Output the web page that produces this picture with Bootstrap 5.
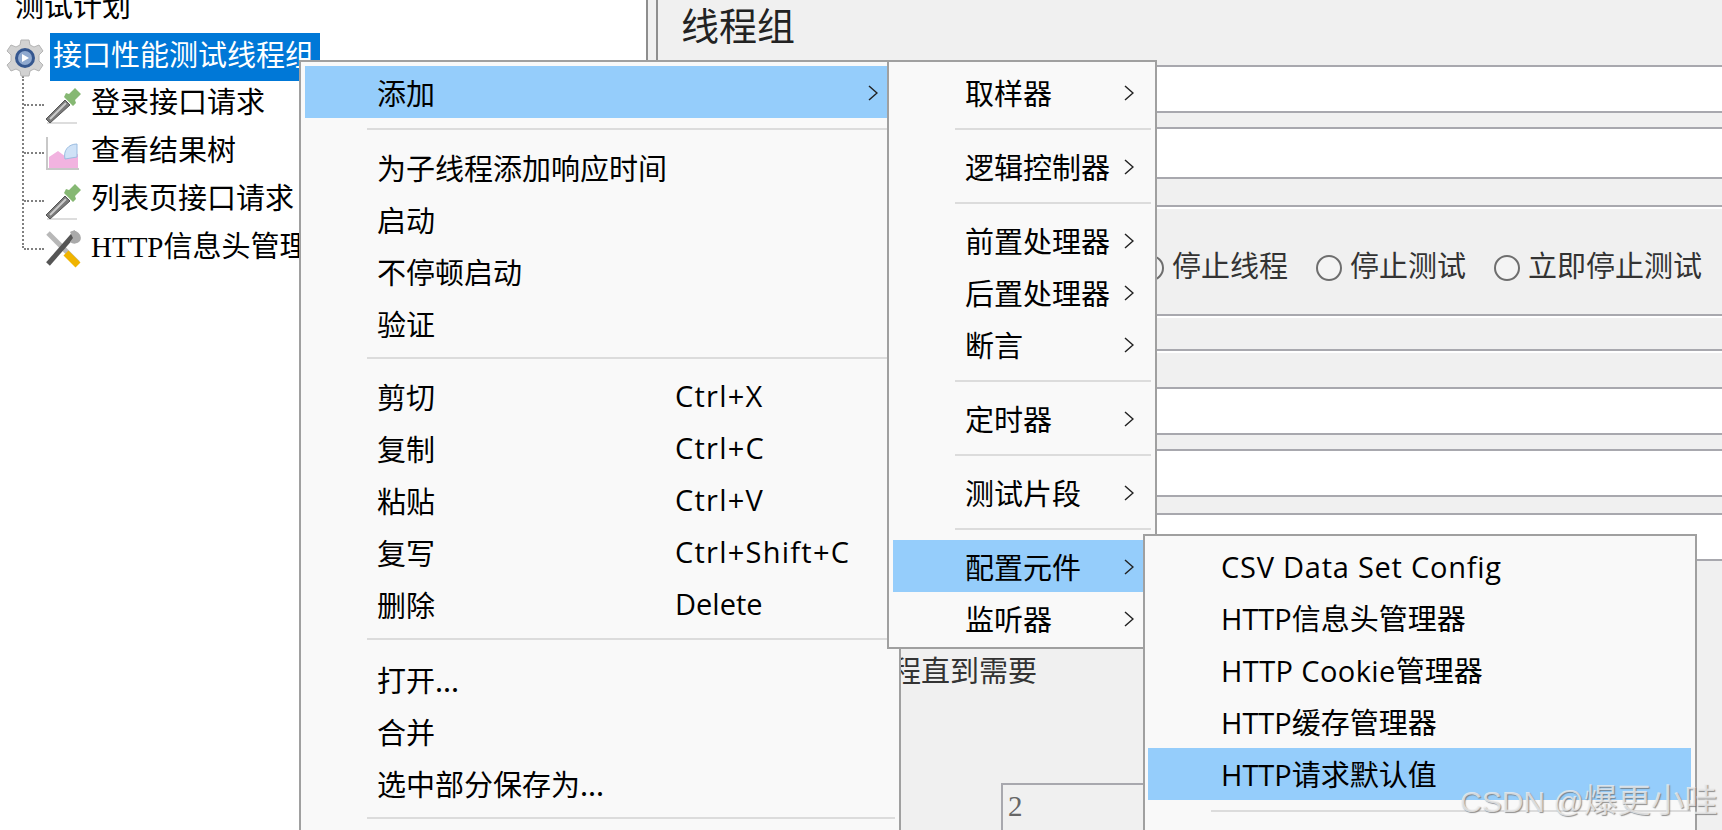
<!DOCTYPE html>
<html lang="zh"><head><meta charset="utf-8"><title>JMeter</title>
<link rel="stylesheet" href="https://cdn.jsdelivr.net/npm/bootstrap@5.3.0/dist/css/bootstrap.min.css">
<style>
html,body{height:830px;overflow:hidden}
body{background:#f0f0f0;font-family:"Noto Sans CJK SC",sans-serif;color:#000}
.stage{height:830px;position:relative;overflow:hidden}
.tree-pane{width:646px;height:830px;background:#fff;flex:none;font-family:"Liberation Serif","Noto Sans CJK SC",serif;font-size:29px;position:relative}
.split-bar{width:12px;flex:none;background:#f0f0f0;border-left:2px solid #8e8e8e;border-right:2px solid #8e8e8e;height:830px}
.plan-title{line-height:34px;margin:-10px 0 0 15px;height:43px}
.tree-root{height:48px;padding-left:6px}
.gear-icon{margin-top:6px;flex:none}
.sel-label{background:#0078d7;color:#fff;height:48px;width:270px;padding-left:3px;line-height:46px;margin-left:6px;white-space:nowrap;overflow:hidden}
.tree-kids{margin-left:22px;border-left:2px dotted #808080;height:172px;padding-top:5px;margin-top:-5px}
.tree-kid{height:48px;position:relative;white-space:nowrap;align-items:center}
.tree-kid::before{content:"";width:20px;border-top:2px dotted #808080;flex:none}
.tree-kid svg{flex:none;margin-right:10px}
.kid-text{margin-left:-1px;margin-top:-3px}
.right-pane{flex:1;min-width:0;font-family:"Liberation Serif","Noto Sans CJK SC",serif;color:#333;font-size:29px}
.pane-title{height:65px;font-size:38px;line-height:54px;padding-left:23px;color:#222}
.field-box{margin-left:120px;background:#fff;border-top:2px solid #a8a8ae;border-bottom:2px solid #a8a8ae;height:48px}
.gap-a{height:14px}.gap-b{height:26px}.gap-c{height:33px}.gap-e{height:16px}
.tall-box{height:52px}
.group-box{margin-left:120px;border-top:2px solid #a8a8ae;border-bottom:2px solid #a8a8ae;height:111px;box-shadow:inset 0 2px 0 #fff,0 2px 0 #fff;padding:14px 20px 0 0;line-height:1}
.group-low{height:38px;border-bottom:0;box-shadow:inset 0 2px 0 #fff;padding:0}
.opt-item{display:flex;align-items:center;gap:8px;white-space:nowrap}
.opt-spaced{margin-right:28px}
.opt-dot{width:26px;height:26px;border:2px solid #6e6e6e;border-radius:50%;background:#f4f4f4;flex:none}
.keep-text{position:absolute;left:863px;top:655px;white-space:nowrap;font-family:"Liberation Serif","Noto Sans CJK SC",serif;font-size:29px;line-height:34px;color:#333}
.count-box{position:absolute;left:1001px;top:783px;width:300px;height:60px;border:2px solid #a8a8ae;padding-left:5px;font-family:"Liberation Serif",serif;font-size:29px;line-height:42px;color:#666}
.pop-menu{position:absolute;background:#f9f9f9;border:2px solid #a0a0a0;padding-top:4px;font-size:29px;line-height:52px;color:#000}
.menu-one{left:299px;top:60px;width:602px;height:800px;padding-left:4px;padding-right:4px;z-index:2}
.menu-two{left:887px;top:60px;width:270px;height:589px;padding-left:4px;padding-right:4px;z-index:3}
.menu-three{left:1143px;top:534px;width:554px;height:320px;padding-left:3px;padding-right:4px;z-index:4;font-family:"Open Sans","Noto Sans CJK SC",sans-serif}
.menu-row{height:52px;white-space:nowrap;position:relative;padding-left:72px}
.menu-three .menu-row{padding-left:73px;line-height:54px}
.menu-on{background:#95cdfb}
.key-text{position:absolute;left:370px;top:0;letter-spacing:1.25px;font-family:"Open Sans",sans-serif}
.key-tight{letter-spacing:0}
.csv-wide{letter-spacing:.75px}
.cookie-wide{letter-spacing:.4px}
.chev{position:absolute;top:19px}
.menu-one .chev{left:563px}
.menu-two .chev{left:231px}
.menu-sep{height:23px;padding-top:10px}
.menu-sep i{display:block;height:2px;background:#dcdcdc;margin-left:62px}
.menu-two .menu-sep{height:22px}
.menu-one .sep-mid{height:21px;padding-top:8px}
.menu-one .sep-low{padding-top:8px}
.menu-three .menu-sep i{margin-left:63px}
.wm-text{position:absolute;left:1460px;top:778px;z-index:5;font-size:33.5px;line-height:40px;white-space:nowrap;color:rgba(238,238,238,.8);text-shadow:1px 1px 1px rgba(110,110,110,.75);font-family:"Noto Sans CJK SC",sans-serif}
.wm-latin{font-size:30px;font-family:"Liberation Sans",sans-serif}
</style></head><body>
<div class="stage d-flex">
 <div class="tree-pane">
  <div class="plan-title">测试计划</div>
  <div class="tree-root d-flex">
   <svg class="gear-icon" width="38" height="38" viewBox="0 0 38 38"><path d="M15 1h8l1 5 4 2 5-2 4 6-4 4v6l4 4-4 6-5-2-4 2-1 5h-8l-1-5-4-2-5 2-4-6 4-4v-6l-4-4 4-6 5 2 4-2z" fill="#d2d2d2" stroke="#b4b4b4"/><circle cx="19" cy="19" r="10" fill="#35578f"/><circle cx="19" cy="19" r="7" fill="#8fa9cf"/><path d="M16 15l7 4-7 4z" fill="#fff"/></svg>
   <div class="sel-label">接口性能测试线程组</div>
  </div>
  <div class="tree-kids">
   <div class="tree-kid d-flex"><svg width="38" height="40" viewBox="0 0 38 40"><path d="M3 38h30" stroke="#ddd" stroke-width="2"/><path d="M2 34l19-19 5 5L6 38z" fill="#7a7a7a" stroke="#555"/><path d="M6 34L22 18" stroke="#ccc" stroke-width="2"/><path d="M20 12l9 9 3-3-1-3 6-6-6-6-6 6-3-1z" fill="#86b873"/></svg><span class="kid-text">登录接口请求</span></div>
   <div class="tree-kid d-flex"><svg width="38" height="40" viewBox="0 0 38 40"><path d="M3 4v32h32" fill="none" stroke="#c8c8c8" stroke-width="2"/><path d="M5 35V24l9-6 8 6 12-3v14z" fill="#f2b3e0"/><path d="M21 26c-2-8 3-15 12-15v13z" fill="#cfe2f7" stroke="#9bbce0"/></svg><span class="kid-text">查看结果树</span></div>
   <div class="tree-kid d-flex"><svg width="38" height="40" viewBox="0 0 38 40"><path d="M3 38h30" stroke="#ddd" stroke-width="2"/><path d="M2 34l19-19 5 5L6 38z" fill="#7a7a7a" stroke="#555"/><path d="M6 34L22 18" stroke="#ccc" stroke-width="2"/><path d="M20 12l9 9 3-3-1-3 6-6-6-6-6 6-3-1z" fill="#86b873"/></svg><span class="kid-text">列表页接口请求</span></div>
   <div class="tree-kid d-flex"><svg width="38" height="40" viewBox="0 0 38 40"><path d="M4 4l30 30" stroke="#b8b8b8" stroke-width="5"/><path d="M22 24l12 12" stroke="#f0b400" stroke-width="7"/><path d="M32 3L4 35" stroke="#555" stroke-width="5"/><path d="M36 12a7 7 0 0 1-10 1l3-4-3-6a7 7 0 0 1 10 9z" fill="#aaa"/></svg><span class="kid-text">HTTP信息头管理器</span></div>
  </div>
 </div>
 <div class="split-bar"></div>
 <div class="right-pane">
  <div class="pane-title">线程组</div>
  <div class="field-box"></div><div class="gap-a"></div>
  <div class="field-box tall-box"></div><div class="gap-b"></div>
  <div class="group-box d-flex align-items-center justify-content-end">
   <div class="opt-item opt-spaced"><span class="opt-dot"></span>停止线程</div>
   <div class="opt-item opt-spaced"><span class="opt-dot"></span>停止测试</div>
   <div class="opt-item"><span class="opt-dot"></span>立即停止测试</div>
  </div>
  <div class="gap-c"></div>
  <div class="group-box group-low"></div>
  <div class="field-box"></div><div class="gap-a"></div>
  <div class="field-box"></div><div class="gap-e"></div>
  <div class="field-box"></div>
 </div>
 <div class="keep-text">线程直到需要</div>
 <div class="count-box">2</div>

 <div class="pop-menu menu-one">
  <div class="menu-row menu-on">添加<svg class="chev" width="10" height="16" viewBox="0 0 10 16"><path d="M1 1l8 7-8 7" fill="none" stroke="#222" stroke-width="1.5"/></svg></div>
  <div class="menu-sep"><i></i></div>
  <div class="menu-row">为子线程添加响应时间</div>
  <div class="menu-row">启动</div>
  <div class="menu-row">不停顿启动</div>
  <div class="menu-row">验证</div>
  <div class="menu-sep sep-mid"><i></i></div>
  <div class="menu-row">剪切<span class="key-text">Ctrl+X</span></div>
  <div class="menu-row">复制<span class="key-text">Ctrl+C</span></div>
  <div class="menu-row">粘贴<span class="key-text">Ctrl+V</span></div>
  <div class="menu-row">复写<span class="key-text">Ctrl+Shift+C</span></div>
  <div class="menu-row">删除<span class="key-text key-tight">Delete</span></div>
  <div class="menu-sep sep-low"><i></i></div>
  <div class="menu-row">打开...</div>
  <div class="menu-row">合并</div>
  <div class="menu-row">选中部分保存为...</div>
  <div class="menu-sep sep-low"><i></i></div>
 </div>

 <div class="pop-menu menu-two">
  <div class="menu-row">取样器<svg class="chev" width="10" height="16" viewBox="0 0 10 16"><path d="M1 1l8 7-8 7" fill="none" stroke="#222" stroke-width="1.5"/></svg></div>
  <div class="menu-sep"><i></i></div>
  <div class="menu-row">逻辑控制器<svg class="chev" width="10" height="16" viewBox="0 0 10 16"><path d="M1 1l8 7-8 7" fill="none" stroke="#222" stroke-width="1.5"/></svg></div>
  <div class="menu-sep"><i></i></div>
  <div class="menu-row">前置处理器<svg class="chev" width="10" height="16" viewBox="0 0 10 16"><path d="M1 1l8 7-8 7" fill="none" stroke="#222" stroke-width="1.5"/></svg></div>
  <div class="menu-row">后置处理器<svg class="chev" width="10" height="16" viewBox="0 0 10 16"><path d="M1 1l8 7-8 7" fill="none" stroke="#222" stroke-width="1.5"/></svg></div>
  <div class="menu-row">断言<svg class="chev" width="10" height="16" viewBox="0 0 10 16"><path d="M1 1l8 7-8 7" fill="none" stroke="#222" stroke-width="1.5"/></svg></div>
  <div class="menu-sep"><i></i></div>
  <div class="menu-row">定时器<svg class="chev" width="10" height="16" viewBox="0 0 10 16"><path d="M1 1l8 7-8 7" fill="none" stroke="#222" stroke-width="1.5"/></svg></div>
  <div class="menu-sep"><i></i></div>
  <div class="menu-row">测试片段<svg class="chev" width="10" height="16" viewBox="0 0 10 16"><path d="M1 1l8 7-8 7" fill="none" stroke="#222" stroke-width="1.5"/></svg></div>
  <div class="menu-sep"><i></i></div>
  <div class="menu-row menu-on">配置元件<svg class="chev" width="10" height="16" viewBox="0 0 10 16"><path d="M1 1l8 7-8 7" fill="none" stroke="#222" stroke-width="1.5"/></svg></div>
  <div class="menu-row">监听器<svg class="chev" width="10" height="16" viewBox="0 0 10 16"><path d="M1 1l8 7-8 7" fill="none" stroke="#222" stroke-width="1.5"/></svg></div>
 </div>

 <div class="pop-menu menu-three">
  <div class="menu-row csv-wide">CSV Data Set Config</div>
  <div class="menu-row">HTTP信息头管理器</div>
  <div class="menu-row"><span class="cookie-wide">HTTP Cookie</span>管理器</div>
  <div class="menu-row">HTTP缓存管理器</div>
  <div class="menu-row menu-on">HTTP请求默认值</div>
  <div class="menu-sep"><i></i></div>
 </div>
 <div class="wm-text"><span class="wm-latin">CSDN @</span>爆更小哇</div>
</div>
</body></html>
